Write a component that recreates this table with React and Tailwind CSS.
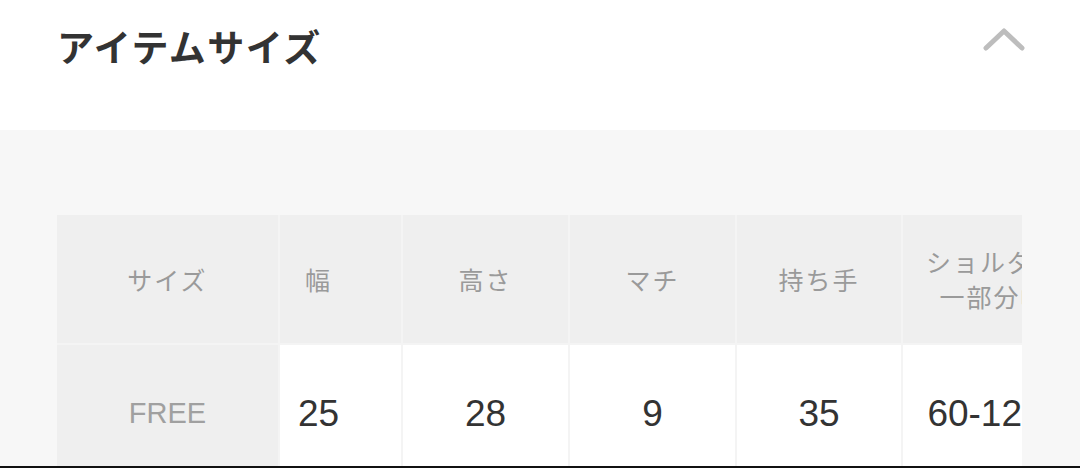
import React from 'react';

const jp = { fontFamily: '"Noto Sans CJK JP", "Noto Sans", "Liberation Sans", sans-serif' };
const num = { fontFamily: '"Liberation Sans", "Noto Sans CJK JP", sans-serif' };

// 列の定義 (幅はスクショから)
const columns = [
  { key: 'size', label: 'サイズ', value: 'FREE', w: 'w-[221px]', head: true },
  { key: 'width', label: '幅', value: '25', w: 'w-[121px]', pad: 'pr-[44px]', vpad: 'pr-[44px]' },
  { key: 'height', label: '高さ', value: '28', w: 'w-[165px]' },
  { key: 'gusset', label: 'マチ', value: '9', w: 'w-[165px]' },
  { key: 'handle', label: '持ち手', value: '35', w: 'w-[164px]' },
  { key: 'shoulder', label: ['ショルダー', '一部分幅'], value: '60-125', w: 'w-[165px]', pad: 'pl-[16px]', vpad: 'pr-[1px]' },
];

function Chevron() {
  return (
    <svg width="44" height="26" viewBox="0 0 44 26" fill="none">
      <path d="M4 22 L22 5 L40 22" stroke="#bdbdbd" strokeWidth="5" strokeLinecap="round" strokeLinejoin="round" />
    </svg>
  );
}

export default function App() {
  return (
    <div className="w-[1080px] h-[468px] overflow-hidden flex flex-col bg-white">
      <header className="h-[130px] shrink-0 flex items-start justify-between pl-[57px] pr-[54px] pt-[22px]">
        <h1 className="text-[37px] leading-[48px] font-bold text-[#333] tracking-[1.5px]" style={jp}>
          アイテムサイズ
        </h1>
        <div className="pt-[4px]">
          <Chevron />
        </div>
      </header>

      <section className="flex-1 min-h-0 bg-[#f7f7f7] pl-[57px] pr-[58px] pt-[85px] overflow-hidden">
        <div className="w-full overflow-hidden">
          <div className="flex flex-col gap-[2px] bg-[#f4f4f4] w-max">
            <div className="flex gap-[2px]">
              {columns.map((c) => (
                <div
                  key={c.key}
                  className={`${c.w} ${c.pad || ''} h-[128px] shrink-0 bg-[#efefef] flex flex-col items-center justify-center text-[25px] leading-[35px] text-[#9a9a9a] tracking-[2px] text-center`}
                  style={jp}
                >
                  {Array.isArray(c.label)
                    ? c.label.map((l) => <span key={l} className="whitespace-nowrap">{l}</span>)
                    : c.label}
                </div>
              ))}
            </div>
            <div className="flex gap-[2px]">
              {columns.map((c) =>
                c.head ? (
                  <div
                    key={c.key}
                    className={`${c.w} h-[140px] pb-[2px] shrink-0 bg-[#efefef] flex items-center justify-center text-[29px] text-[#a0a0a0]`}
                    style={num}
                  >
                    {c.value}
                  </div>
                ) : (
                  <div
                    key={c.key}
                    className={`${c.w} ${c.vpad || ''} h-[140px] pb-[2px] shrink-0 bg-white flex items-center justify-center text-[37px] text-[#333] whitespace-nowrap`}
                    style={num}
                  >
                    {c.value}
                  </div>
                )
              )}
            </div>
          </div>
        </div>
      </section>
      <div className="h-[2px] shrink-0 bg-[#111]" />
    </div>
  );
}
